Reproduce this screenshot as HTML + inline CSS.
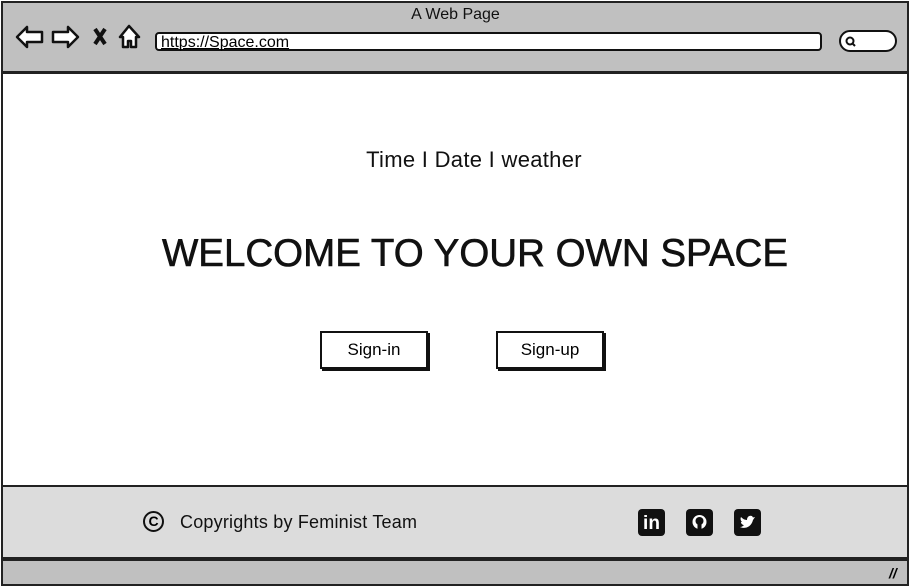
<!DOCTYPE html>
<html><head><style>
*{margin:0;padding:0;box-sizing:border-box}
body{width:911px;height:587px;background:#fff;font-family:"Liberation Sans",sans-serif;position:relative;overflow:hidden}
.frame{position:absolute;left:1px;top:1px;width:908px;height:584px;border:2px solid #222;border-radius:3px;background:#fff}
.top{position:absolute;left:1px;top:1px;width:908px;height:73px;background:#c0c0c0;border:2px solid #222;border-bottom:3px solid #222}
.title{position:absolute;top:6px;left:0;width:911px;text-align:center;font-size:16px;color:#111}
.url{position:absolute;left:155px;top:32px;width:667px;height:19px;background:#fff;border:2px solid #111;border-radius:4px;font-size:16px;line-height:17px;padding-left:4px;text-decoration:underline}
.search{position:absolute;left:839px;top:30px;width:58px;height:22px;background:#fff;border:2px solid #111;border-radius:11px}
.foot{position:absolute;left:1px;top:485px;width:908px;height:74px;background:#dcdcdc;border:2px solid #222}
.bot{position:absolute;left:1px;top:559px;width:908px;height:27px;background:#c0c0c0;border:2px solid #222}
.t1{position:absolute;top:147px;left:0;width:948px;text-align:center;font-size:22px;color:#111;letter-spacing:0.3px}
.h{position:absolute;top:232px;left:160px;width:630px;text-align:center;font-size:38.5px;color:#111;white-space:nowrap;-webkit-text-stroke:0.6px #111}
.btn{position:absolute;top:331px;height:38px;background:#fff;border:2px solid #111;box-shadow:2px 2px 0 #111;font-size:17px;text-align:center;line-height:34px}
.copy{position:absolute;left:180px;top:512px;font-size:18px;color:#111;letter-spacing:0.2px}
.ic{position:absolute;top:509px;width:27px;height:27px;background:#111;border-radius:4px}
</style></head><body>
<div class="frame"></div>
<div class="top"></div>
<div class="title">A Web Page</div>
<svg style="position:absolute;left:14px;top:24px" width="130" height="28" fill="#fff" stroke="#111" stroke-width="2.5" stroke-linejoin="round">
<path d="M3 13 L13 3 L13 8 L28 8 L28 18 L13 18 L13 23 Z"/>
<path d="M64 13 L54 3 L54 8 L39 8 L39 18 L54 18 L54 23 Z"/>
<path d="M81 5 L91 20 M91 5 L81 20" stroke-width="4" fill="none"/>
<path d="M115 2 L106 13 L109 13 L109 23 L114 23 L114 17 L117 17 L117 23 L122 23 L122 13 L125 13 Z"/>
</svg>
<div class="url">https://Space.com</div>
<div class="search"><svg width="14" height="14" style="position:absolute;left:3px;top:3px"><circle cx="6" cy="6" r="3.5" fill="none" stroke="#111" stroke-width="2"/><path d="M8 8 L11 11" stroke="#111" stroke-width="2"/></svg></div>
<div class="t1">Time I Date I weather</div>
<div class="h">WELCOME TO YOUR OWN SPACE</div>
<div class="btn" style="left:320px;width:108px">Sign-in</div>
<div class="btn" style="left:496px;width:108px">Sign-up</div>
<div class="foot"></div>
<div style="position:absolute;left:143px;top:511px;width:21px;height:21px;border:2px solid #111;border-radius:50%;font-size:14px;line-height:17px;text-align:center;font-weight:bold">C</div>
<div class="copy">Copyrights by Feminist Team</div>
<div class="ic" style="left:638px;color:#fff;font-weight:bold;font-size:19px;text-align:center;line-height:29px">in</div>
<div class="ic" style="left:686px"><svg width="27" height="27"><circle cx="13.5" cy="13" r="7" fill="#fff"/><circle cx="13.5" cy="12" r="4" fill="#111"/><rect x="11.5" y="15" width="4" height="6" fill="#111"/></svg></div>
<div class="ic" style="left:734px"><svg width="27" height="27"><path d="M6 18 C10 20 17 19 19 11 L21 8 L19 8.5 L18 7 C15 6 13 8 13 11 C10 11 8 9 7 8 C6 10 7 12 8 13 L7 13 C7 15 9 16 10 16 C9 17 8 18 6 18Z" fill="#fff"/></svg></div>
<div class="bot"></div>
<div style="position:absolute;left:889px;top:565px;font-size:14px;font-weight:bold;font-style:italic">//</div>
</body></html>
